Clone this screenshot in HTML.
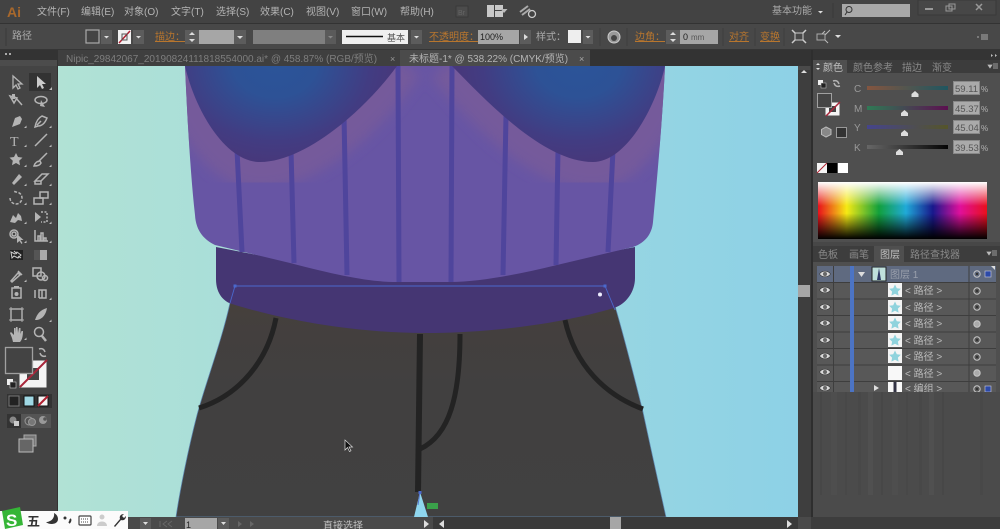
<!DOCTYPE html>
<html><head><meta charset="utf-8"><style>
html,body{margin:0;padding:0;background:#444;width:1000px;height:529px;overflow:hidden}
svg{display:block;filter:blur(.35px)}
text{font-family:"Liberation Sans","Noto Sans CJK SC",sans-serif;fill:#b4b4b4;font-size:10px}
.o{fill:#b8762e;text-decoration:underline}
.t{fill:#a8a8a8;font-size:10px}
.i{fill:none;stroke:#b4b4b4;stroke-width:1.5}
.f{fill:#b4b4b4}
.d{fill:#5c5c5c}
.a{fill:#ddd}
</style></head><body>
<svg width="1000" height="529" viewBox="0 0 1000 529" xmlns="http://www.w3.org/2000/svg">
<defs>
<linearGradient id="bg" x1="0" x2="1" y1="0" y2="0"><stop offset="0" stop-color="#b1e2d5"/><stop offset=".5" stop-color="#a0dade"/><stop offset="1" stop-color="#8dd1e6"/></linearGradient>
<radialGradient id="cupL" gradientUnits="userSpaceOnUse" cx="275" cy="62" r="100" gradientTransform="translate(275 62) scale(1.200 1) translate(-275 -62)"><stop offset="0" stop-color="#2b5499"/><stop offset=".35" stop-color="#2d5296"/><stop offset=".8" stop-color="#423c82"/><stop offset="1" stop-color="#47387b"/></radialGradient>
<radialGradient id="cupR" gradientUnits="userSpaceOnUse" cx="578" cy="62" r="100" gradientTransform="translate(578 62) scale(1.200 1) translate(-578 -62)"><stop offset="0" stop-color="#2b5499"/><stop offset=".35" stop-color="#2d5296"/><stop offset=".8" stop-color="#423c82"/><stop offset="1" stop-color="#47387b"/></radialGradient>
<linearGradient id="pt" x1="0" x2="0" y1="0" y2="1"><stop offset="0" stop-color="#46403c"/><stop offset=".15" stop-color="#433f3e"/><stop offset=".4" stop-color="#414040"/><stop offset="1" stop-color="#414141"/></linearGradient>
<linearGradient id="hue" x1="0" x2="1" y1="0" y2="0"><stop offset="0" stop-color="#e8101c"/><stop offset=".17" stop-color="#f5ea14"/><stop offset=".36" stop-color="#12a03c"/><stop offset=".52" stop-color="#20aad8"/><stop offset=".68" stop-color="#18188c"/><stop offset=".84" stop-color="#e0109c"/><stop offset="1" stop-color="#e8101c"/></linearGradient>
<linearGradient id="wh" x1="0" x2="0" y1="0" y2="1"><stop offset="0" stop-color="#fff"/><stop offset=".42" stop-color="#fff" stop-opacity="0"/><stop offset=".55" stop-color="#000" stop-opacity="0"/><stop offset="1" stop-color="#000"/></linearGradient>
<linearGradient id="sc" x1="0" x2="1" y1="0" y2="0"><stop offset="0" stop-color="#84553f"/><stop offset="1" stop-color="#1f5660"/></linearGradient>
<linearGradient id="sm" x1="0" x2="1" y1="0" y2="0"><stop offset="0" stop-color="#2f7a55"/><stop offset="1" stop-color="#5c1050"/></linearGradient>
<linearGradient id="sy" x1="0" x2="1" y1="0" y2="0"><stop offset="0" stop-color="#45448c"/><stop offset="1" stop-color="#55552a"/></linearGradient>
<linearGradient id="sk" x1="0" x2="1" y1="0" y2="0"><stop offset="0" stop-color="#666"/><stop offset="1" stop-color="#050505"/></linearGradient>
<pattern id="noise" width="61" height="26" patternUnits="userSpaceOnUse"><rect width="61" height="26" fill="#4b4b4b"/><rect x="4" width="3" height="26" fill="#484848"/><rect x="14" width="5" height="26" fill="#505050"/><rect x="27" width="2" height="26" fill="#474747"/><rect x="38" width="6" height="26" fill="#4e4e4e"/><rect x="52" width="2" height="26" fill="#484848"/></pattern>
<filter id="soft" x="-20%" y="-20%" width="140%" height="140%"><feGaussianBlur stdDeviation="6"/></filter>
<clipPath id="swc"><path d="M185 66C187 110 190 170 195 215 196 232 205 240 215 245L290 263C340 276 370 282 397 282H450C480 282 520 274 557 265L633 247C645 243 652 234 653 222 658 170 663 110 665 66Z"/></clipPath>
<g id="star"><rect width="14" height="14" fill="#f4f4f4"/><path d="M7 1.500l1.800 3.700 4 .6-2.900 2.800.7 4-3.600-1.900-3.600 1.900.7-4L1.200 5.800l4-.6z" fill="#8fd3dd"/></g>
<g id="eye"><path d="M-5.500 0C-3-3.800 3-3.800 5.500 0 3 3.800-3 3.800-5.500 0z" fill="#d8d8d8" stroke="#333" stroke-width=".6"/><circle r="2" fill="#666"/></g>
<g id="tgt"><circle r="3.200" fill="none" stroke="#c8c8c8" stroke-width="1"/><circle r="1.200" fill="#333"/></g>
<g id="tgf"><circle r="3.200" fill="#aaa" stroke="#c8c8c8"/></g>
<g id="thumb"><path d="M-3.500 3v-3l3.500-3 3.500 3v3z" fill="#ddd"/></g>
</defs>

<!-- base -->
<rect width="1000" height="529" fill="#434343"/>
<rect y="0" width="1000" height="23" fill="#434343"/>
<rect y="23" width="1000" height="1" fill="#333"/>
<rect y="24" width="1000" height="26" fill="#484848"/>
<rect y="49" width="1000" height="17" fill="#353535"/>

<!-- canvas -->
<rect x="58" y="66" width="740" height="451" fill="url(#bg)"/>
<path d="M230 303C222 340 205 385 197 415 188 450 180 490 176 517H666C660 490 650 445 643 412 635 380 625 340 615 306Z" fill="url(#pt)" stroke="#5e86b0" stroke-width=".7"/>
<g fill="none" stroke="#232323" stroke-width="5">
<path d="M276 318C268 360 240 395 199 408"/>
<path d="M565 320C575 365 605 395 643 409"/>
<path d="M420 334L418 492" stroke-width="6"/>
<path d="M460 334C460 395 450 435 420 449"/>
</g>
<path d="M216 247V279C216 295 225 302 232 304 290 322 360 333 425 333 490 333 560 324 614 308 626 304 635 292 635 278V247L450 282H397Z" fill="#453673"/>
<path d="M185 66C187 110 190 170 195 215 196 232 205 240 215 245L290 263C340 276 370 282 397 282H450C480 282 520 274 557 265L633 247C645 243 652 234 653 222 658 170 663 110 665 66Z" fill="#6755a4"/>
<g clip-path="url(#swc)"><g filter="url(#soft)" fill="none" stroke="#745a9b" stroke-width="54">
<path d="M180 60C195 110 225 162 260 162 305 162 365 110 397 60"/>
<path d="M452 60C490 105 545 162 593 162 625 162 655 110 670 60"/>
</g></g>
<g stroke="#4f459c" stroke-width="5" fill="none">
<path d="M237 150L242 252"/><path d="M291 150L294 263"/><path d="M344 115L347 275"/><path d="M398 66L399 282"/><path d="M452 66L451 282"/><path d="M506 115L503 275"/><path d="M558 150L556 265"/><path d="M613 150L608 252"/>
</g>
<path d="M185 66C195 110 225 162 260 162 305 162 365 110 397 66Z" fill="url(#cupL)"/>
<path d="M452 66C490 105 545 162 593 162 625 162 655 110 665 66Z" fill="url(#cupR)"/>
<g stroke="#4a68cc" stroke-width=".9" fill="none"><path d="M230 303L235 286H605L615 310"/></g>
<rect x="233.500" y="284.500" width="3" height="3" fill="#4a68cc"/><rect x="603.500" y="284.500" width="3" height="3" fill="#4a68cc"/>
<circle cx="600" cy="294.500" r="2" fill="#eef"/>
<path d="M420 492L428 517H414Z" fill="#8fd6ee"/><path d="M420 492L418 505" stroke="#5a7ad0" stroke-width="1"/><rect x="418.500" y="491" width="3" height="3" fill="#4a68cc"/>
<rect x="427" y="503" width="11" height="6" fill="#3aa04a"/>
<path d="M345 440v10l2.500-2.500 2 4 1.500-.8-2-3.700h3.500z" fill="#111" stroke="#ddd" stroke-width=".7"/>

<!-- menu bar -->
<text x="7" y="17" style="font-size:14px;fill:#a8682c;font-weight:bold">Ai</text>
<text x="37" y="15">文件(F)</text><text x="81" y="15">编辑(E)</text><text x="124" y="15">对象(O)</text><text x="171" y="15">文字(T)</text><text x="216" y="15">选择(S)</text><text x="260" y="15">效果(C)</text><text x="306" y="15">视图(V)</text><text x="351" y="15">窗口(W)</text><text x="400" y="15">帮助(H)</text>
<rect x="456" y="6" width="12" height="11" fill="#4c4c4c" stroke="#3a3a3a"/><text x="458" y="15" style="font-size:7px;fill:#666">Br</text>
<rect x="487" y="5" width="7" height="12" fill="#c8c8c8"/><rect x="495" y="5" width="8" height="5" fill="#c8c8c8"/><rect x="495" y="11" width="8" height="6" fill="#c8c8c8"/><path d="M501 9h7l-3.500 4z" fill="#bbb" transform="translate(-.5 0)"/>
<path d="M520 12l8-6M522 15l8-6" stroke="#aaa" stroke-width="2"/><circle cx="532" cy="14" r="3.500" fill="none" stroke="#ccc" stroke-width="1.300"/>
<text x="772" y="14" style="fill:#aaa">基本功能</text><path d="M818 11h5l-2.500 2.500z" class="a"/>
<path d="M833 3v15" stroke="#3a3a3a"/>
<rect x="842" y="4" width="68" height="13" fill="#a8a8a8"/><circle cx="849" cy="9.500" r="3" fill="none" stroke="#333"/><path d="M847 12l-2 3" stroke="#333"/>
<rect x="918" y="0" width="78" height="15" fill="#474747" stroke="#3a3a3a"/><path d="M925 9h8" stroke="#999" stroke-width="2"/><rect x="946" y="6" width="6" height="5" fill="none" stroke="#999"/><rect x="949" y="4" width="6" height="5" fill="none" stroke="#999"/><path d="M976 4l6 6m0-6l-6 6" stroke="#999" stroke-width="1.500"/>

<!-- control bar -->
<path d="M6 28v18" stroke="#3a3a3a"/>
<text x="12" y="39" style="fill:#aaa">路径</text>
<rect x="86" y="30" width="13" height="13" fill="#444" stroke="#aaa" stroke-width="1.200"/>
<rect x="101" y="30" width="11" height="14" class="d"/><path d="M104 36h5l-2.500 2.500z" class="a"/>
<rect x="118" y="30" width="13" height="14" fill="#f2f2f2"/><path d="M119 43L130 31" stroke="#b02030" stroke-width="1.500"/><rect x="122" y="34" width="5" height="6" fill="none" stroke="#555"/>
<rect x="133" y="30" width="11" height="14" class="d"/><path d="M136 36h5l-2.500 2.500z" class="a"/>
<text x="155" y="40" class="o">描边：</text>
<rect x="185" y="30" width="14" height="14" class="d"/><path d="M189 35l3-3 3 3zM189 39l3 3 3-3z" class="a"/>
<rect x="199" y="30" width="35" height="14" fill="#a6a6a6"/><rect x="234" y="30" width="12" height="14" class="d"/><path d="M237 36h6l-3 3z" class="a"/>
<rect x="253" y="30" width="72" height="14" fill="#7f7f7f"/><rect x="325" y="30" width="11" height="14" fill="#5a5a5a"/><path d="M328 36h5l-2.500 2.500z" fill="#888"/>
<rect x="342" y="30" width="66" height="14" fill="#efefef"/><path d="M346 36.500h37" stroke="#111" stroke-width="1.500"/><text x="387" y="41" style="font-size:9px;fill:#555">基本</text>
<rect x="411" y="30" width="11" height="14" class="d"/><path d="M414 36h5l-2.500 2.500z" class="a"/>
<text x="429" y="40" class="o">不透明度：</text>
<rect x="478" y="30" width="41" height="14" fill="#a6a6a6"/><text x="480" y="40" style="font-size:9px;fill:#222">100%</text>
<rect x="520" y="30" width="11" height="14" class="d"/><path d="M524 34l4 3-4 3z" class="a"/>
<text x="536" y="40" style="fill:#aaa">样式：</text>
<rect x="568" y="30" width="13" height="13" fill="#eee"/><rect x="583" y="30" width="10" height="14" class="d"/><path d="M585.500 36h5l-2.500 2.500z" class="a"/>
<circle cx="614" cy="37" r="6" fill="#999" stroke="#ccc"/><circle cx="614" cy="38" r="3" fill="#444"/>
<path d="M600 28v18M627 28v18" stroke="#3e3e3e"/>
<text x="635" y="40" class="o">边角：</text>
<rect x="666" y="30" width="14" height="14" class="d"/><path d="M670 35l3-3 3 3zM670 39l3 3 3-3z" class="a"/>
<rect x="680" y="30" width="38" height="14" fill="#a6a6a6"/><text x="683" y="40" style="font-size:9px;fill:#222">0</text><text x="691" y="40" style="font-size:8px;fill:#555">mm</text>
<text x="729" y="40" class="o">对齐</text><text x="760" y="40" class="o">变换</text>
<path d="M723 28v18M755 28v18M784 28v18" stroke="#3e3e3e"/>
<rect x="795" y="33" width="8" height="7" fill="none" stroke="#ccc"/><path d="M792 30l3 3M806 30l-3 3M792 43l3-3M806 43l-3-3" stroke="#ccc" stroke-width="1.500"/>
<rect x="817" y="34" width="8" height="6" fill="none" stroke="#aaa"/><path d="M825 31l-3 3M830 30l-5 5M825 40l3 3" stroke="#bbb"/><path d="M835 35h6l-3 3z" class="a"/>
<path d="M977 37h2M981 35h7M981 37h7M981 39h7" stroke="#aaa"/>

<!-- tabs -->
<rect x="0" y="50" width="58" height="16" fill="#333"/>
<rect x="58" y="50" width="342" height="16" fill="#3f3f3f"/>
<rect x="400" y="50" width="190" height="16" fill="#4b4b4b"/>
<rect x="590" y="50" width="222" height="16" fill="#333"/>
<text x="66" y="62" style="font-size:10px;fill:#7e7e7e">Nipic_29842067_20190824111818554000.ai* @ 458.87% (RGB/预览)</text>
<text x="390" y="62" style="font-size:9px;fill:#999">×</text>
<text x="409" y="62" style="font-size:10px;fill:#b4b4b4">未标题-1* @ 538.22% (CMYK/预览)</text>
<text x="579" y="62" style="font-size:9px;fill:#aaa">×</text>
<path d="M5 53h2M9 53h2" stroke="#aaa" stroke-width="2" transform="translate(0 1)"/>

<!-- left toolbar -->
<rect x="0" y="66" width="58" height="451" fill="#444"/>
<rect x="57" y="66" width="1" height="451" fill="#333"/>
<rect x="0" y="60" width="57" height="6" fill="#4c4c4c"/>
<rect x="29" y="73" width="22" height="18" fill="#333"/>
<path d="M13 76v12l3-3 2 4 2-1-2-4h4z" fill="none" stroke="#b4b4b4" stroke-width="1.300"/>
<path d="M37 76v12l3-3 2 4 2-1-2-4h4z" fill="#ccc"/>
<path d="M15 97l7 8M10 96l7 2-3 5z" class="i"/><path d="M12 94h3v5h-3z" class="f"/>
<ellipse cx="41" cy="100" rx="6" ry="3.500" class="i"/><path d="M41 100l4 7-5-1z" class="f"/>
<path d="M12 127l3-9 5-2 2 3-2 5z" class="f"/>
<path d="M35 127c1-5 3-9 7-11l5 2c-2 5-5 8-9 8zM37 125l4-4" class="i"/>
<text x="10" y="146" style="font-size:14px;font-family:'Liberation Serif',serif;fill:#b4b4b4">T</text>
<path d="M35 146l12-12" class="i"/>
<path d="M16 153l2 4 4.500.6-3.300 3.100.8 4.500-4-2.200-4 2.200.8-4.500-3.300-3.100 4.500-.6z" class="f"/>
<path d="M47 153l-9 9M34 166c1-3 3-5 6-5l1 2c-1 2-4 3-7 3z" class="i"/>
<path d="M12 183l7-9 3 3-8 8z" class="f"/>
<path d="M35 181l7-7h6l-7 7zM35 181v3h6v-3" class="i"/>
<path d="M10 198a6 6 0 1 0 6-6l-3-1" class="i" stroke-dasharray="3 1.500"/>
<rect x="40" y="192" width="8" height="6" class="i"/><rect x="34" y="198" width="9" height="6" class="i"/>
<path d="M10 222l3-7 3 3 2-5 3 3 1 5-4-1-3 3z" class="f"/>
<path d="M41 212h6v10h-6" class="i" stroke-dasharray="2 1.500"/><path d="M35 212v10l6-5z" class="f"/>
<circle cx="14" cy="234" r="4" class="i"/><circle cx="14" cy="234" r="2" class="i"/><path d="M17 234v9l2.500-2 2 3 1-1-2-3h3z" class="f"/>
<path d="M35 230v11h13M38 241v-5h2v5M41 241v-8h2v8M44 241v-3h2v3" class="i"/>
<rect x="10" y="250" width="13" height="10" fill="#222"/><path d="M11 252l4 2 2-2 4 3-3 3-4-2-2 2zM14 251l3 3M18 256l3 2" stroke="#ccc" fill="none"/>
<rect x="34" y="250" width="13" height="10" fill="#aaa"/><rect x="34" y="250" width="6" height="10" fill="#555"/>
<path d="M11 281l7-8 2 2-8 7zM18 271l4 4" class="i"/>
<rect x="33" y="268" width="8" height="8" class="i"/><circle cx="41" cy="276" r="4" class="i"/><circle cx="45" cy="278" r="2.500" class="i"/>
<rect x="12" y="288" width="9" height="10" class="i"/><circle cx="16.500" cy="294" r="2" class="f"/><rect x="14" y="286" width="5" height="2" class="f"/>
<path d="M35 298v-8M39 298v-8h7v8h-7M42 290v8" class="i"/>
<rect x="11" y="309" width="11" height="11" class="i"/><path d="M9 309h15M9 320h15M11 307v15M22 307v15" stroke="#aaa"/>
<path d="M35 320c2-6 5-10 12-12-1 6-4 11-10 12z" class="f"/>
<path d="M12 338l-2-5 1-1 3 3v-7h1.500v5l.5-6h1.500l.5 6 1-5h1.500v6l1-3h1.500c0 5-1 9-3 11h-7z" class="f"/>
<circle cx="39" cy="332" r="4.500" class="i"/><path d="M42 336l4 5" stroke="#b4b4b4" stroke-width="2.500"/>
<g fill="#bbb"><path d="M49 90h3v-3zM24 128h2.500v-2.500zM49 128h2.500v-2.500zM24 147h2.500v-2.500zM49 147h2.500v-2.500zM24 167h2.500v-2.500zM49 167h2.500v-2.500zM24 186h2.500v-2.500zM49 186h2.500v-2.500zM24 205h2.500v-2.500zM49 205h2.500v-2.500zM24 224h2.500v-2.500zM49 224h2.500v-2.500zM24 243h2.500v-2.500zM49 243h2.500v-2.500zM24 282h2.500v-2.500zM49 300h2.500v-2.500zM49 322h2.500v-2.500zM24 340h2.500v-2.500z"/></g>
<!-- swatches -->
<rect x="19.500" y="360.500" width="27" height="27" fill="#f4f4f4"/><rect x="27" y="368" width="12" height="12" fill="#444"/><path d="M20 387L47 360" stroke="#a8263a" stroke-width="2"/>
<rect x="5.500" y="347.500" width="27" height="26" fill="#434343" stroke="#a0a0a0" stroke-width="1.300"/>
<path d="M39 349c3-1 5 0 6 3M46 356c-3 1-5 0-6-3" class="i" stroke-width="1"/>
<rect x="7" y="379" width="6" height="6" fill="#eee"/><rect x="10" y="382" width="6" height="6" fill="#222" stroke="#ccc" stroke-width=".6"/>
<rect x="7" y="394" width="45" height="14" fill="#333"/>
<rect x="9" y="396" width="10" height="10" fill="#222" stroke="#777"/>
<rect x="24" y="396" width="10" height="10" fill="#9fd8e4" stroke="#111"/>
<rect x="38" y="396" width="10" height="10" fill="#f4f4f4" stroke="#111"/><path d="M38 406l10-10" stroke="#b02030" stroke-width="2"/>
<rect x="7" y="414" width="14" height="14" fill="#333"/><rect x="21" y="414" width="30" height="14" fill="#555"/>
<circle cx="13" cy="420" r="3.500" fill="#888"/><rect x="14" y="421" width="5" height="5" fill="#ccc"/>
<circle cx="29" cy="421" r="4" fill="none" stroke="#999"/><circle cx="32" cy="422" r="3.500" fill="#777" stroke="#999"/>
<circle cx="43" cy="420" r="4" fill="#999"/><circle cx="45" cy="419" r="1.800" fill="#555"/>
<rect x="24" y="435" width="12" height="11" fill="#777" stroke="#aaa"/><rect x="19" y="439" width="14" height="13" fill="#666" stroke="#bbb"/>

<!-- right gutter -->
<rect x="798" y="66" width="14" height="451" fill="#3e3e3e"/>
<rect x="811" y="50" width="2" height="479" fill="#2e2e2e"/>
<rect x="798" y="285" width="12" height="12" fill="#a6a6a6"/>
<rect x="798" y="66" width="12" height="4" fill="#4a4a4a"/><path d="M801 73l3-3 3 3z" class="a"/>

<!-- right panel -->
<rect x="813" y="50" width="187" height="479" fill="#4b4b4b"/>
<rect x="813" y="50" width="187" height="10" fill="#343434"/>
<path d="M991 54l2 1.500-2 1.500zM995 54l2 1.500-2 1.500z" fill="#bbb"/>
<rect x="813" y="60" width="187" height="13" fill="#3c3c3c"/>
<rect x="813" y="60" width="34" height="13" fill="#4f4f4f"/>
<path d="M816 65l2-2 2 2zM816 68l2 2 2-2z" class="a"/>
<text x="823" y="71" style="fill:#c0c0c0">颜色</text><text x="853" y="71" class="t" style="fill:#8a8a8a">颜色参考</text><text x="902" y="71" style="fill:#8a8a8a">描边</text><text x="932" y="71" style="fill:#8a8a8a">渐变</text>
<path d="M988 65h4l-2 3zM993 64h5M993 66h5M993 68h5" stroke="#bbb" fill="#bbb" stroke-width=".7"/>
<rect x="813" y="73" width="187" height="169" fill="#4f4f4f"/>
<rect x="818" y="80" width="5" height="5" fill="#eee"/><rect x="821" y="83" width="5" height="5" fill="#222" stroke="#ccc" stroke-width=".5"/>
<path d="M833 81c3-1 5 0 6 3M840 86c-3 1-5 0-6-3" class="i" stroke-width="1"/>
<rect x="825.500" y="102.500" width="14" height="13" fill="#f4f4f4"/><rect x="829" y="106" width="7" height="6" fill="#444"/><path d="M826 116l14-14" stroke="#a8263a" stroke-width="1.500"/>
<rect x="817.500" y="93.500" width="14" height="14" fill="#454545" stroke="#a0a0a0"/>
<path d="M826 127l5 2.500v5l-5 2.500-4.500-2.500v-5z" fill="#888" stroke="#bbb"/>
<rect x="836.500" y="127.500" width="10" height="10" fill="#333" stroke="#999"/>
<text x="854" y="92" style="fill:#999">C</text><text x="854" y="112" style="fill:#999">M</text><text x="854" y="131" style="fill:#999">Y</text><text x="854" y="151" style="fill:#999">K</text>
<rect x="867" y="86" width="81" height="4" fill="url(#sc)"/><rect x="867" y="106" width="81" height="4" fill="url(#sm)"/><rect x="867" y="125" width="81" height="4" fill="url(#sy)"/><rect x="867" y="145" width="81" height="4" fill="url(#sk)"/>
<use href="#thumb" x="915" y="94"/><use href="#thumb" x="904.500" y="113"/><use href="#thumb" x="904.500" y="133"/><use href="#thumb" x="899.500" y="152"/>
<rect x="953.500" y="81.500" width="26" height="13" fill="#aaa" stroke="#888"/><rect x="953.500" y="101.500" width="26" height="13" fill="#aaa" stroke="#888"/><rect x="953.500" y="120.500" width="26" height="13" fill="#aaa" stroke="#888"/><rect x="953.500" y="140.500" width="26" height="13" fill="#aaa" stroke="#888"/>
<text x="955" y="92" style="font-size:9.500px;fill:#555">59.11</text><text x="955" y="112" style="font-size:9.500px;fill:#555">45.37</text><text x="955" y="131" style="font-size:9.500px;fill:#555">45.04</text><text x="955" y="151" style="font-size:9.500px;fill:#555">39.53</text>
<text x="981" y="92" style="font-size:8px">%</text><text x="981" y="112" style="font-size:8px">%</text><text x="981" y="131" style="font-size:8px">%</text><text x="981" y="151" style="font-size:8px">%</text>
<rect x="817" y="163" width="10" height="10" fill="#f4f4f4"/><path d="M817 173l10-10" stroke="#b02030"/>
<rect x="827" y="163" width="10" height="10" fill="#000"/><rect x="838" y="163" width="10" height="10" fill="#fff"/>
<rect x="818" y="182" width="169" height="57" fill="url(#hue)"/><rect x="818" y="182" width="169" height="57" fill="url(#wh)"/>

<rect x="813" y="242" width="187" height="4" fill="#474747"/>
<rect x="813" y="246" width="187" height="16" fill="#3d3d3d"/>
<rect x="874" y="246" width="30" height="16" fill="#4f4f4f"/>
<text x="818" y="258" style="fill:#8a8a8a">色板</text><text x="849" y="258" style="fill:#8a8a8a">画笔</text><text x="880" y="258" style="fill:#c0c0c0">图层</text><text x="910" y="258" style="fill:#8a8a8a">路径查找器</text>
<path d="M987 252h4l-2 3zM992 251h5M992 253h5M992 255h5" stroke="#bbb" fill="#bbb" stroke-width=".7"/>
<rect x="813" y="262" width="187" height="130" fill="#4f4f4f"/>

<!-- layers -->
<rect x="817" y="266" width="179" height="16" fill="#5f6a80"/>
<rect x="817" y="283" width="179" height="109" fill="#585858"/>
<g stroke="#3e3e3e" fill="none"><path d="M817 282.500h179M817 299h179M817 315.500h179M817 332h179M817 348.500h179M817 365h179M817 381.500h179M833.500 266v126M969 266v126"/></g>
<rect x="850" y="266" width="4" height="126" fill="#4c74c4"/>
<use href="#eye" x="825" y="274"/><use href="#eye" x="825" y="290"/><use href="#eye" x="825" y="307"/><use href="#eye" x="825" y="323"/><use href="#eye" x="825" y="340"/><use href="#eye" x="825" y="356"/><use href="#eye" x="825" y="372"/><use href="#eye" x="825" y="388"/>
<path d="M858 272h7l-3.500 5z" class="a"/>
<rect x="872" y="267" width="14" height="14" fill="#bfe0dc" stroke="#222"/><path d="M879 268l-2 12h4z" fill="#2f3a66"/>
<text x="890" y="278" style="fill:#9aa0ac">图层 1</text>
<use href="#star" x="888" y="283"/><use href="#star" x="888" y="300"/><use href="#star" x="888" y="316"/><use href="#star" x="888" y="333"/><use href="#star" x="888" y="349"/>
<rect x="888" y="366" width="14" height="14" fill="#f8f8f8"/>
<rect x="888" y="382" width="14" height="10" fill="#f8f8f8"/><path d="M895 382v10" stroke="#334" stroke-width="3"/>
<path d="M874 385l5 3-5 3z" class="a"/>
<text x="905" y="294" style="fill:#bcbcbc">&lt; 路径 &gt;</text><text x="905" y="311" style="fill:#bcbcbc">&lt; 路径 &gt;</text><text x="905" y="327" style="fill:#bcbcbc">&lt; 路径 &gt;</text><text x="905" y="344" style="fill:#bcbcbc">&lt; 路径 &gt;</text><text x="905" y="360" style="fill:#bcbcbc">&lt; 路径 &gt;</text><text x="905" y="377" style="fill:#bcbcbc">&lt; 路径 &gt;</text>
<text x="905" y="392" style="fill:#bcbcbc">&lt; 编组 &gt;</text>
<use href="#tgt" x="977" y="274"/><use href="#tgt" x="977" y="291"/><use href="#tgt" x="977" y="307"/><use href="#tgf" x="977" y="324"/><use href="#tgt" x="977" y="340"/><use href="#tgt" x="977" y="357"/><use href="#tgf" x="977" y="373"/><use href="#tgt" x="977" y="389"/>
<rect x="985" y="271" width="6" height="6" fill="#2c4aa8" stroke="#ccd" stroke-width=".6"/><rect x="985" y="386" width="6" height="6" fill="#2c4aa8" stroke="#ccd" stroke-width=".6"/>
<path d="M991 266h4v4z" fill="#ddd"/>
<rect x="814" y="392" width="186" height="137" fill="#4b4b4b"/>
<rect x="815" y="392" width="130" height="103" fill="url(#noise)"/>
<rect x="973" y="392" width="17" height="103" fill="url(#noise)"/>

<!-- status bar -->
<rect x="0" y="517" width="1000" height="12" fill="#3d3d3d"/>
<rect x="128" y="517" width="305" height="12" fill="#4a4a4a"/>
<rect x="140" y="518" width="11" height="11" class="d"/><path d="M143 522h5l-2.500 3z" class="a"/>
<path d="M160 521v6M167 521l-4 3 4 3M172 521l-4 3 4 3" stroke="#666" fill="none"/>
<rect x="185" y="518" width="32" height="11" fill="#a6a6a6"/><text x="186" y="528" style="font-size:9px;fill:#222">1</text>
<rect x="218" y="518" width="11" height="11" class="d"/><path d="M221 522h5l-2.500 3z" class="a"/>
<path d="M238 521l4 3-4 3zM250 521l4 3-4 3zM256 521v6" fill="#666"/>
<text x="323" y="529" style="font-size:10px;fill:#c0c0c0">直接选择</text>
<path d="M424 520l5 4-5 4z" class="a"/>
<rect x="433" y="517" width="365" height="12" fill="#3a3a3a"/>
<path d="M444 520l-5 4 5 4z" class="a"/>
<rect x="610" y="517" width="11" height="12" fill="#a6a6a6"/>
<path d="M787 520l5 4-5 4z" class="a"/>
<rect x="798" y="517" width="13" height="12" fill="#4a4a4a"/>

<!-- IME bar -->
<rect x="0" y="511" width="128" height="18" fill="#fbfbfb"/>
<path d="M2 511l18-4 3 18-18 4z" fill="#35b536"/>
<text x="6" y="526" style="font-size:17px;font-weight:bold;fill:#fff">S</text>
<text x="27" y="526" style="font-size:13px;fill:#333;font-weight:bold">五</text>
<path d="M54 513c1 5-3 9-8 9 3 3 12 3 12-3 0-3-2-5-4-6z" fill="#333"/>
<circle cx="65" cy="518" r="1.500" fill="#333"/><path d="M70 519c1 1 0 3-1 4" stroke="#333" stroke-width="2" fill="none"/>
<rect x="79" y="516" width="12" height="9" rx="1" fill="#fff" stroke="#444" stroke-width="1.200"/><path d="M81 519h8M81 522h8" stroke="#444" stroke-dasharray="1 1"/>
<circle cx="102" cy="517" r="2.500" fill="#ccc"/><path d="M97 526c0-6 10-6 10 0z" fill="#ccc"/>
<path d="M114 526l6-7c-1-3 1-5 4-5l-2 2 2 2 2-2c0 3-2 5-5 4l-6 7z" fill="#333"/>
</svg>
</body></html>
